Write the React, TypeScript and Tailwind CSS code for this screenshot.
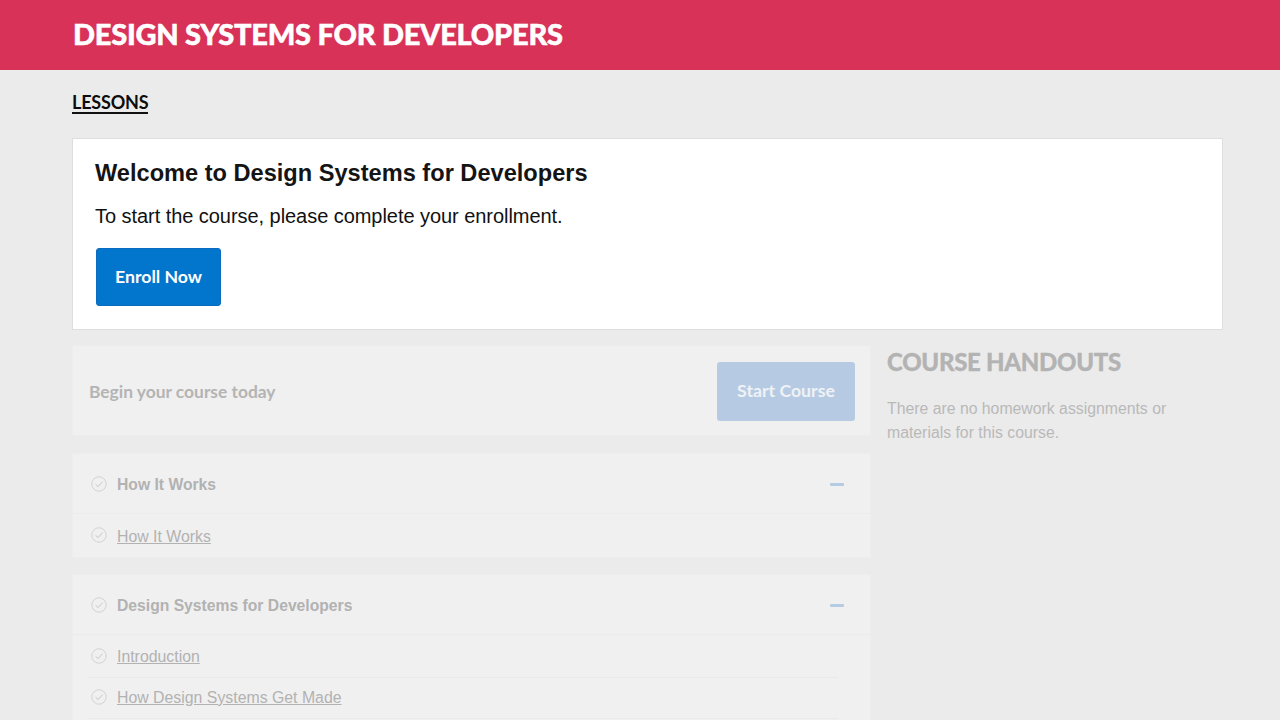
const sans = "font-['Liberation_Sans',Arial,sans-serif]";
const brand = "font-['Lato',sans-serif]";

function Check() {
  return (
    <svg width="16" height="16" viewBox="0 0 16 16" fill="none" className="shrink-0">
      <circle cx="8" cy="8" r="7.2" stroke="#d2d2d2" strokeWidth="1" />
      <path d="M4.6 8.3 L7.1 10.6 L11.5 5.7" stroke="#c6c6c6" strokeWidth="1" />
    </svg>
  );
}

function Minus() {
  return <div className="w-[14px] h-[3px] bg-[#b5cbe4] rounded-[1px]" />;
}

function SectionHead({ title }: { title: string }) {
  return (
    <div className="h-[60px] pt-[1px] flex items-center justify-between pl-[18px] pr-[26px] border-b border-[#ebebeb]">
      <div className="flex items-center gap-[10px]">
        <Check />
        <span className={`${sans} text-[15.7px] font-bold text-[#b2b2b2] mt-[2px]`}>{title}</span>
      </div>
      <Minus />
    </div>
  );
}

export default function App() {
  return (
    <div className={`h-[720px] overflow-hidden bg-[#ebebeb] ${sans}`}>
      <header className="h-[70px] bg-[#d83258] pl-[73px] flex items-center">
        <h1 className={`${brand} text-[29px] font-black text-white uppercase tracking-[-0.25px] leading-none pb-[4px] [-webkit-text-stroke:0.5px_white]`}>
          Design Systems for Developers
        </h1>
      </header>

      <main className="pl-[72px] pr-[57px] pt-[22px]">
        <div className="flex">
          <span className={`${brand} text-[18px] font-bold text-[#0c0c0c] uppercase leading-[20px] h-[22px] border-b-2 border-[#111111] tracking-[-0.2px]`}>
            Lessons
          </span>
        </div>

        <section className="mt-[24px] h-[192px] bg-white border border-[#dedede] pl-[22px] pt-[20px]">
          <h2 className={`${sans} text-[23.6px] font-bold leading-[28px] text-[#141414]`}>
            Welcome to Design Systems for Developers
          </h2>
          <p className={`${sans} text-[20px] leading-[24px] mt-[17px] text-[#111111] tracking-[-0.05px]`}>
            To start the course, please complete your enrollment.
          </p>
          <button className={`${brand} mt-[20px] ml-[1px] w-[125px] h-[58px] pt-[1px] bg-[#0275cc] border border-[#0b6bc0] rounded-[3px] text-white text-[17.7px] font-bold`}>
            Enroll Now
          </button>
        </section>

        <div className="flex mt-[16px] gap-[16px]">
          <div className="w-[799px] shrink-0 flex flex-col gap-[17px]">
            <div className="h-[91px] -mt-[1px] bg-[#f0f0f0] border border-[#ededed] pl-[16px] pr-[15px] flex items-center justify-between">
              <span className={`${brand} text-[17.4px] font-bold text-[#b4b4b4] mt-[3px]`}>Begin your course today</span>
              <button className={`${brand} w-[138px] h-[59px] mt-[2px] bg-[#b6cbe3] rounded-[3px] text-[#eef2f6] text-[17.7px] font-bold`}>
                Start Course
              </button>
            </div>

            <div className="bg-[#f0f0f0] border border-[#ededed] h-[105px]">
              <SectionHead title="How It Works" />
              <div className="h-[43px] pl-[18px] pb-[1px] flex items-center gap-[10px]">
                <Check />
                <a className={`${sans} text-[15.85px] text-[#b2b2b2] underline mt-[4px]`}>How It Works</a>
              </div>
            </div>

            <div className="bg-[#f0f0f0] border border-[#ededed] h-[200px] -mt-[1px]">
              <SectionHead title="Design Systems for Developers" />
              <div className="h-[43px] ml-[16px] mr-[32px] pl-[2px] flex items-center gap-[10px] border-b border-[#e9e9e9]">
                <Check />
                <a className={`${sans} text-[15.85px] text-[#b2b2b2] underline mt-[1px]`}>Introduction</a>
              </div>
              <div className="h-[41px] ml-[16px] mr-[32px] pl-[2px] pb-[2px] flex items-center gap-[10px] border-b border-[#e9e9e9]">
                <Check />
                <a className={`${sans} text-[15.85px] text-[#b2b2b2] underline mt-[1px]`}>How Design Systems Get Made</a>
              </div>
            </div>
          </div>

          <aside className="flex-1">
            <h3 className={`${brand} text-[24px] font-black text-[#b3b3b3] uppercase leading-[34px] tracking-[-0.3px] -mt-[1px] [-webkit-text-stroke:0.3px_#b3b3b3]`}>
              Course Handouts
            </h3>
            <p className={`${sans} text-[15.8px] leading-[23.5px] mt-[18px] text-[#b9b9b9]`}>
              There are no homework assignments or<br />materials for this course.
            </p>
          </aside>
        </div>
      </main>
    </div>
  );
}
